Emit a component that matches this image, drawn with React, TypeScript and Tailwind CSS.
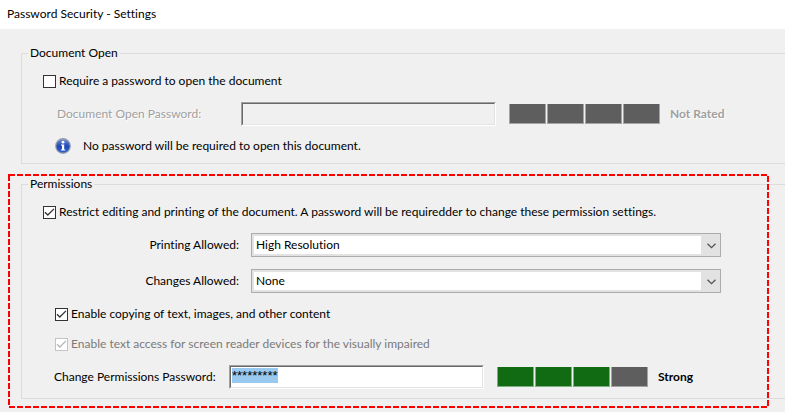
import { useEffect, useRef, useState } from 'react';
import type { ReactNode } from 'react';

interface CheckOptionProps {
  label: ReactNode;
  checked: boolean;
  onChange?: (checked: boolean) => void;
  disabled?: boolean;
}

function CheckOption({ label, checked, onChange, disabled = false }: CheckOptionProps) {
  return (
    <label className={`flex h-6 items-center gap-[3px] whitespace-nowrap ${disabled ? 'text-[#7a7a7a]' : ''}`}>
      <span className="relative flex">
        <input
          type="checkbox"
          checked={checked}
          disabled={disabled}
          onChange={(e) => onChange?.(e.target.checked)}
          className="size-[13px] appearance-none border border-[#333] bg-white disabled:border-[#c3c3c3]"
        />
        {checked && (
          <svg
            viewBox="0 0 13 13"
            className={`pointer-events-none absolute inset-0 ${disabled ? 'text-[#b4b4b4]' : 'text-[#333]'}`}
            fill="none"
            stroke="currentColor"
            strokeWidth="1.3"
          >
            <path d="M2 6.2 4.8 9 11 2.9" />
          </svg>
        )}
      </span>
      <span>{label}</span>
    </label>
  );
}

interface SelectRowProps {
  id: string;
  label: string;
  value: string;
  options: string[];
  onChange: (value: string) => void;
  className: string;
}

function SelectRow({ id, label, value, options, onChange, className }: SelectRowProps) {
  return (
    <div className={`flex items-center gap-3 pr-16 ${className}`}>
      <label htmlFor={id} className="w-[217px] text-right">{label}</label>
      <div className="relative flex flex-1 border border-[#acacac]">
        <select
          id={id}
          value={value}
          onChange={(e) => onChange(e.target.value)}
          className="h-[22px] w-full appearance-none border-2 border-r-[19px] border-[#e2e2e2] bg-white pl-0.5 outline-none"
        >
          {options.map(option => (
            <option key={option}>{option}</option>
          ))}
        </select>
        <svg
          viewBox="0 0 9 6"
          className="pointer-events-none absolute top-[9px] right-1 h-1.5 w-[9px]"
          fill="none"
          stroke="#555"
          strokeWidth="1.3"
        >
          <path d="M0.5 0.7 4.5 4.7 8.5 0.7" />
        </svg>
      </div>
    </div>
  );
}

interface StrengthMeterProps {
  score: number;
}

function StrengthMeter({ score }: StrengthMeterProps) {
  return (
    <div className="flex h-5">
      {[0, 1, 2, 3].map(i => (
        <span
          key={i}
          className={`w-[37px] border-x border-b ${
            i < score ? 'border-[#7fae80] bg-[#106b12]' : 'border-[#a4a4a4] bg-[#5e5e5e]'
          } ${i > 0 ? 'ml-px' : ''}`}
        />
      ))}
    </div>
  );
}

function InfoIcon() {
  return (
    <svg viewBox="0 0 16 16" className="size-4">
      <defs>
        <linearGradient id="info-fill" x1="0" y1="0" x2="0" y2="1">
          <stop offset="0" stopColor="#6f8fdc" />
          <stop offset="0.5" stopColor="#2149b4" />
          <stop offset="1" stopColor="#2d5fd2" />
        </linearGradient>
      </defs>
      <circle cx="8" cy="8" r="7.9" fill="#969ba8" />
      <circle cx="8" cy="8" r="6.6" fill="url(#info-fill)" />
      <circle cx="8" cy="4.2" r="1.4" fill="#fff" />
      <path d="M6 6.5H9.2V11.5H10.3V12.6H5.9V11.5H7V7.6H6Z" fill="#fff" />
    </svg>
  );
}

const FIELD_BOX = 'flex w-[255px] border border-t-[#a0a0a0] border-l-[#a0a0a0] border-r-white border-b-white';
const FIELD = 'h-[22px] w-full border border-t-[#696969] border-l-[#696969] border-r-[#e3e3e3] border-b-[#e3e3e3] outline-none';
const GROUP = 'border border-r-0 border-[#dcdcdc]';
const EMBOSSED = 'text-[#a0a0a0] [text-shadow:1px_1px_0_#fff]';

export default function App() {
  const [requireOpen, setRequireOpen] = useState(false);
  const [restrict, setRestrict] = useState(true);
  const [copying, setCopying] = useState(true);
  const [printing, setPrinting] = useState('High Resolution');
  const [changes, setChanges] = useState('None');
  const [password, setPassword] = useState('*********');
  const passwordRef = useRef<HTMLInputElement>(null);

  useEffect(() => {
    passwordRef.current?.focus();
    passwordRef.current?.select();
  }, []);

  return (
    <div className="min-h-screen bg-[#f0f0f0] font-['Lato','Open_Sans',sans-serif] text-[12px] leading-4 text-black [font-variant-ligatures:none]">
      <header className="flex h-[29px] items-center bg-white px-[7px] pb-0.5">
        <h1>Password Security - Settings</h1>
      </header>

      <main className="flex flex-col gap-3 pt-4">
        <div className="pl-[21px]">
          <fieldset className={GROUP}>
            <legend className="ml-1.5 px-0.5">Document Open</legend>
            <div className="flex flex-col gap-[9px] pt-2 pb-1.5 pl-[21px]">
              <CheckOption
                label="Require a password to open the document"
                checked={requireOpen}
                onChange={setRequireOpen}
              />
              <div className="flex items-center pl-3.5">
                <label htmlFor="open-password" className={`w-[184px] ${EMBOSSED}`}>
                  Document Open Password:
                </label>
                <div className={FIELD_BOX}>
                  <input id="open-password" type="password" disabled={!requireOpen} className={FIELD} />
                </div>
                <div className="ml-[13px] flex items-center gap-2.5">
                  <StrengthMeter score={0} />
                  <span className={`font-bold ${EMBOSSED}`}>Not Rated</span>
                </div>
              </div>
              <p className="flex h-[22px] items-center gap-3 pl-3">
                <InfoIcon />
                No password will be required to open this document.
              </p>
            </div>
          </fieldset>
        </div>

        <div className="relative pl-[21px]">
          <fieldset className={GROUP}>
            <legend className="ml-1.5 px-0.5">Permissions</legend>
            <div className="pt-2 pb-[9px]">
              <div className="pl-[21px]">
                <CheckOption
                  label="Restrict editing and printing of the document. A password will be requiredder to change these permission settings."
                  checked={restrict}
                  onChange={setRestrict}
                />
              </div>
              <SelectRow
                id="printing"
                label="Printing Allowed:"
                value={printing}
                options={['None', 'Low Resolution (150 dpi)', 'High Resolution']}
                onChange={setPrinting}
                className="mt-[9px]"
              />
              <SelectRow
                id="changes"
                label="Changes Allowed:"
                value={changes}
                options={['None', 'Filling in form fields', 'Commenting']}
                onChange={setChanges}
                className="mt-3"
              />
              <div className="mt-[9px] flex flex-col gap-1.5 pl-[33px]">
                <CheckOption
                  label="Enable copying of text, images, and other content"
                  checked={copying}
                  onChange={setCopying}
                />
                <CheckOption
                  label="Enable text access for screen reader devices for the visually impaired"
                  checked
                  disabled
                />
              </div>
              <div className="mt-[9px] flex items-center pl-8">
                <label htmlFor="permissions-password" className="w-[175px] whitespace-nowrap">
                  Change Permissions Password:
                </label>
                <div className={FIELD_BOX}>
                  <input
                    id="permissions-password"
                    ref={passwordRef}
                    type="text"
                    autoComplete="off"
                    value={password}
                    onChange={(e) => setPassword(e.target.value)}
                    className={`${FIELD} bg-white pb-1 pl-px font-['Liberation_Sans',sans-serif] text-[13px] selection:bg-[#99c9ef] selection:text-black`}
                  />
                </div>
                <div className="ml-[13px] flex items-center gap-2.5">
                  <StrengthMeter score={3} />
                  <strong className="font-bold">Strong</strong>
                </div>
              </div>
            </div>
          </fieldset>

          {/* Red dashed callout around the permissions group */}
          <div className="pointer-events-none absolute -top-px right-[17px] -bottom-2 left-[9px]">
            <svg className="size-full overflow-visible">
              <rect width="100%" height="100%" fill="none" stroke="#f00" strokeWidth="2" strokeDasharray="6 2" />
            </svg>
          </div>
        </div>
      </main>
    </div>
  );
}
